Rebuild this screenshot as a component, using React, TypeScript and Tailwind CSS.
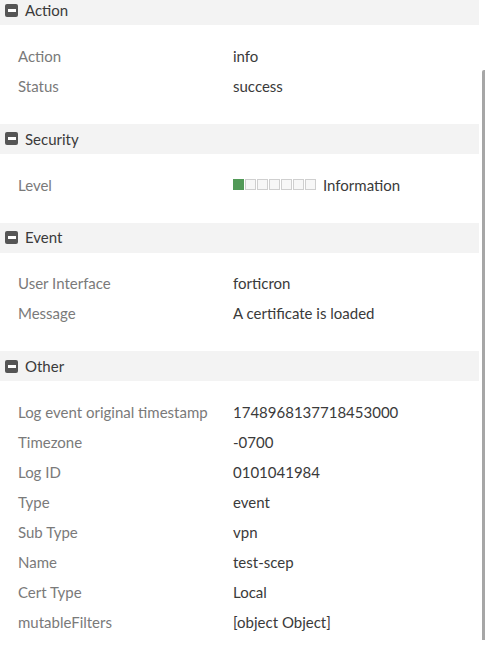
import React from "react";

type Row = { label: string; value: React.ReactNode };

const MinusBox = () => (
  <span className="inline-flex h-[13px] w-[13px] items-center justify-center rounded-[2px] bg-[#555555]">
    <span className="block h-[3px] w-[8px] bg-white" />
  </span>
);

const Level = () => (
  <span className="flex items-center">
    <span className="flex items-center gap-[1px]">
      <span className="block h-[11px] w-[11px] bg-[#529a58]" />
      {[0, 1, 2, 3, 4, 5].map((i) => (
        <span key={i} className="block h-[11px] w-[11px] border border-[#cfcfcf] bg-[#f7f7f7]" />
      ))}
    </span>
    <span className="ml-[7px]">Information</span>
  </span>
);

const sections: { title: string; rows: Row[] }[] = [
  {
    title: "Action",
    rows: [
      { label: "Action", value: "info" },
      { label: "Status", value: "success" },
    ],
  },
  { title: "Security", rows: [{ label: "Level", value: <Level /> }] },
  {
    title: "Event",
    rows: [
      { label: "User Interface", value: "forticron" },
      { label: "Message", value: "A certificate is loaded" },
    ],
  },
  {
    title: "Other",
    rows: [
      { label: "Log event original timestamp", value: "1748968137718453000" },
      { label: "Timezone", value: "-0700" },
      { label: "Log ID", value: "0101041984" },
      { label: "Type", value: "event" },
      { label: "Sub Type", value: "vpn" },
      { label: "Name", value: "test-scep" },
      { label: "Cert Type", value: "Local" },
      { label: "mutableFilters", value: "[object Object]" },
    ],
  },
];

export default function App() {
  return (
    <div
      className="relative h-[651px] w-[485px] overflow-hidden bg-white"
      style={{ fontFamily: "Lato, 'Open Sans', sans-serif" }}
    >
      <div className="-mt-[5px] w-[479px]">
        {sections.map((s) => (
          <div key={s.title}>
            <div className="flex h-[30px] items-center gap-[7px] bg-[#f3f3f3] pl-[5px] text-[15px] text-[#3a3a3a]">
              <MinusBox />
              <span>{s.title}</span>
            </div>
            <div className="pb-[22.75px] pt-4">
              {s.rows.map((r) => (
                <div key={r.label} className="flex h-[30px] items-center text-[15px]">
                  <div className="w-[233px] shrink-0 pl-[18px] text-[#7a7a7a]">{r.label}</div>
                  <div className="text-[#3a3a3a]">{r.value}</div>
                </div>
              ))}
            </div>
          </div>
        ))}
      </div>
      <div className="absolute right-0 top-[70px] h-[570px] w-[3px] rounded-tl-[2px] bg-[#a6a6a6]" />
    </div>
  );
}
